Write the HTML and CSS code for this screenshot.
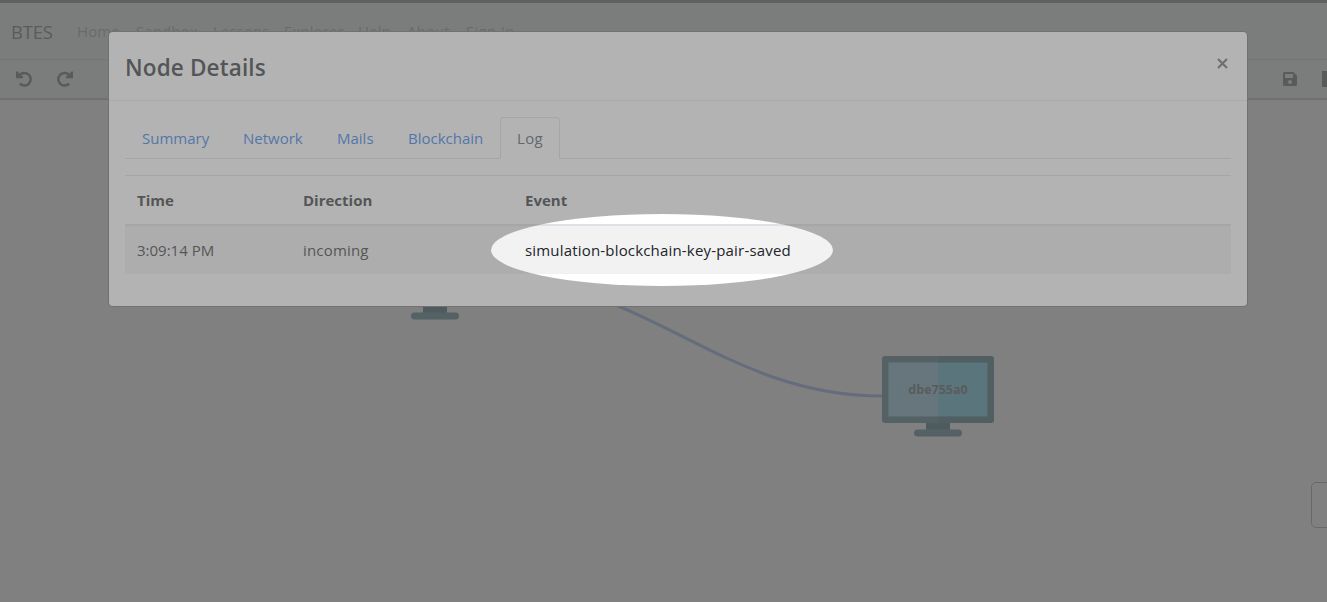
FILE: index.html
```html
<!DOCTYPE html>
<html lang="en">
<head>
<meta charset="utf-8">
<title>BTES</title>
<link rel="stylesheet" href="styles.css">
</head>
<body>
<div class="app">
  <nav class="navbar">
    <a class="brand">BTES</a>
    <a class="nav-link w-home">Home</a>
    <a class="nav-link w-sandbox">Sandbox</a>
    <a class="nav-link w-lessons">Lessons</a>
    <a class="nav-link w-explorer">Explorer</a>
    <a class="nav-link w-help">Help</a>
    <a class="nav-link w-about">About</a>
    <a class="nav-link w-sign">Sign In</a>
  </nav>
  <div class="toolbar">
    <svg class="tool" width="18" height="18" viewBox="0 0 18 18"><path d="M2.300 1.500V7H8M2.800 6.500C6 2.200 11.500 1.700 14.300 5.200C17.500 9.500 14.500 15.500 9.500 15.500C7.600 15.500 6 14.900 4.800 13.700"/><path class="tip" d="M1.200 1.500V8H7.500Z"/></svg>
    <svg class="tool" width="18" height="18" viewBox="0 0 18 18"><path d="M15.700 1.500V7H10M15.200 6.500C12 2.200 6.500 1.700 3.700 5.200C.5 9.500 3.500 15.500 8.500 15.500C10.400 15.500 12 14.900 13.200 13.700"/><path class="tip" d="M16.800 1.500V8H10.500Z"/></svg>
    <svg class="save" width="14" height="14" viewBox="0 0 14 14"><path fill-rule="evenodd" d="M1.500 0H10.300L14 3.700V12.500Q14 14 12.500 14H1.500Q0 14 0 12.500V1.500Q0 0 1.500 0ZM2 2V6H10V2ZM7 8A2 2 0 1 0 7 12A2 2 0 1 0 7 8Z"/></svg>
    <span class="cut-icon"></span>
  </div>
  <main class="canvas">
    <svg class="link" width="1327" height="502" viewBox="0 100 1327 502"><path d="M491 279C647 279 721 396 882 396"/></svg>
    <div class="node node-left">
      <svg width="112" height="81" viewBox="0 0 112 81"><use href="#monitor"/></svg>
    </div>
    <div class="node node-right">
      <svg width="112" height="81" viewBox="0 0 112 81">
        <g id="monitor">
          <rect class="frame" width="112" height="67" rx="3"/>
          <path class="screen-left" d="M6.500 6.500H56V60.500H6.500Z"/>
          <path class="screen-right" d="M56 6.500H105.500V60.500H56Z"/>
          <path class="neck" d="M44 67H68V74H44Z"/>
          <rect class="frame" x="32" y="73.500" width="48" height="7" rx="3.500"/>
          <path class="shade" d="M56 0H109Q112 0 112 3V64Q112 67 109 67H56V60.500H105.500V6.500H56Z"/>
        </g>
      </svg>
      <span class="node-name">dbe755a0</span>
    </div>
    <div class="side-panel"></div>
  </main>
</div>

<section class="modal">
  <header class="modal-header">
    <h1>Node Details</h1>
    <svg class="close" width="11" height="11" viewBox="0 0 11 11"><path d="M1 1L10 10M10 1L1 10"/></svg>
  </header>
  <div class="modal-body">
    <div class="tabs">
      <a class="tab t-summary">Summary</a>
      <a class="tab t-network">Network</a>
      <a class="tab t-mails">Mails</a>
      <a class="tab t-blockchain">Blockchain</a>
      <a class="tab t-log active">Log</a>
    </div>
    <table class="log">
      <thead><tr><th class="c-time">Time</th><th class="c-direction">Direction</th><th>Event</th></tr></thead>
      <tbody><tr><td>3:09:14 PM</td><td class="way">incoming</td><td class="event">simulation-blockchain-key-pair-saved</td></tr></tbody>
    </table>
  </div>
</section>
<div class="spotlight"></div>
</body>
</html>
```
FILE: styles.css
```css
* { box-sizing: border-box; }
body {
  margin: 0;
  position: relative;
  width: 1327px;
  height: 602px;
  overflow: hidden;
  background: #898989;
  color: #212529;
  font: 15px/24px "Open Sans", "Noto Sans", sans-serif;
}
.app { display: flex; flex-direction: column; height: 602px; }
.navbar {
  display: flex;
  align-items: center;
  flex: 0 0 60px;
  padding-left: 11px;
  border-top: 3px solid #3c413c;
  border-bottom: 1px solid #6e726e;
  background: #7e837f;
}
.brand { width: 66px; padding-top: 1px; font-size: 18.500px; letter-spacing: -0.2px; color: #303330; }
.nav-link { color: #525652; white-space: nowrap; letter-spacing: 0.100px; }
.w-home { width: 59px; }
.w-sandbox { width: 77px; }
.w-lessons { width: 71px; }
.w-explorer { width: 74px; }
.w-help { width: 49px; }
.w-about { width: 59px; }
.w-sign { letter-spacing: 0.300px; }
.toolbar {
  display: flex;
  align-items: center;
  flex: 0 0 40px;
  gap: 24px;
  padding-left: 15px;
  border-bottom: 2px solid #626562;
  background: #7e837f;
}
.tool { margin-right: -1px; fill: none; stroke: #303330; stroke-width: 2.500; }
.tip { fill: #303330; stroke: none; }
.save { margin-left: auto; margin-right: 1px; fill: #303330; }
.cut-icon { width: 5px; height: 16px; background: #303330; }
.canvas { position: relative; flex: 1; }
.link { position: absolute; left: 0; top: 0; }
.link path { fill: none; stroke: #4b5b80; stroke-width: 3; }
.node { position: absolute; width: 112px; height: 81px; }
.node svg { display: block; }
.node-left { left: 379px; top: 139px; }
.node-right { left: 882px; top: 256px; }
.node-name {
  position: absolute;
  left: 0;
  top: 22px;
  width: 112px;
  text-align: center;
  font-size: 12.500px;
  font-weight: 700;
  color: #303337;
}
.frame { fill: #23424c; }
.neck { fill: #1b343c; }
.shade { fill: #172f36; opacity: .3; }
.screen-left { fill: #4d7381; }
.screen-right { fill: #326f80; }
.side-panel {
  position: absolute;
  left: 1311px;
  top: 382px;
  width: 40px;
  height: 46px;
  border: 1px solid #555;
  border-radius: 5px;
}
.modal {
  position: absolute;
  left: 109px;
  top: 32px;
  width: 1138px;
  height: 274px;
  border-radius: 4px;
  background: #fff;
  box-shadow: 0 0 0 1px #656765;
}
.modal-header {
  display: flex;
  justify-content: space-between;
  height: 69px;
  padding: 20px 19px 0 16px;
  border-bottom: 1px solid #e4e7ea;
}
h1 { margin: 0; font-size: 22.500px; line-height: 32px; font-weight: 600; letter-spacing: 0.150px; }
.close { margin-top: 6px; fill: none; stroke: #626262; stroke-width: 2.200; }
.modal-body { padding: 16px; }
.tabs { display: flex; height: 42px; border-bottom: 1px solid #dee2e6; }
.tab { height: 42px; padding: 9px 0 0 17px; color: #1972e8; white-space: nowrap; }
.t-summary { width: 101px; }
.t-network { width: 94px; }
.t-mails { width: 71px; }
.t-blockchain { width: 109px; }
.t-log { width: 60px; padding: 8px 0 0 16px; letter-spacing: 0.300px; }
.active {
  border: 1px solid #dee2e6;
  border-bottom-color: #fff;
  border-radius: 4px 4px 0 0;
  background: #fff;
  color: #495057;
}
.log {
  width: 1106px;
  margin-top: 16px;
  table-layout: fixed;
  border-collapse: separate;
  border-spacing: 0;
}
th, td { padding: 12px; text-align: left; }
th { height: 51px; border-top: 1px solid #dee2e6; border-bottom: 2px solid #dee2e6; }
td { height: 48px; background: #f2f2f2; }
.c-time { width: 166px; }
.c-direction { width: 222px; }
.way, .event { letter-spacing: 0.180px; }
.spotlight {
  position: absolute;
  left: 491px;
  top: 214px;
  width: 342px;
  height: 72px;
  border-radius: 50%;
  box-shadow: 0 0 0 1400px rgba(121, 121, 121, .57);
}
```
